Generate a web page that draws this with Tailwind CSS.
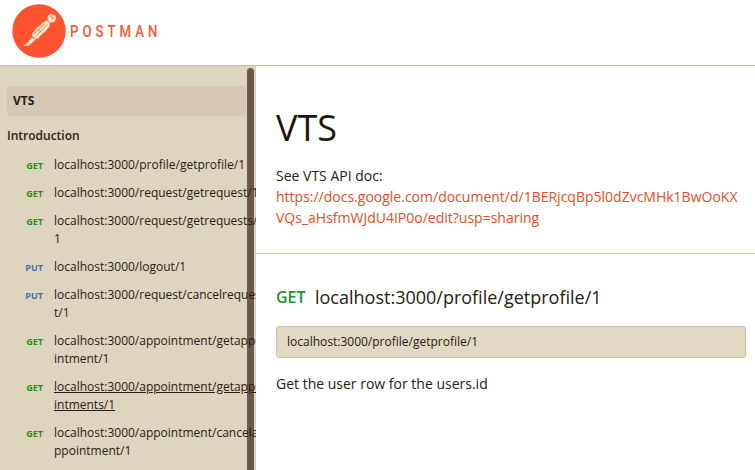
<!DOCTYPE html>
<html lang="en">
<head>
<meta charset="utf-8">
<title>VTS</title>
<script src="https://cdn.jsdelivr.net/npm/@tailwindcss/browser@4"></script>
</head>
<body class="flex h-[470px] w-[755px] flex-col overflow-hidden bg-white font-['Open_Sans',sans-serif] text-[#282010]">
<header class="flex h-[66px] shrink-0 border-b border-[#c8bda9] pl-3 pt-1">
  <svg class="h-[56px] w-[150px]" viewBox="0 0 150 56" role="img" aria-label="Postman">
    <circle cx="27" cy="27" r="26.7" fill="#ff5230"/>
    <g fill="#f9e6c4">
      <path d="M34.5 16.6L37.6 18.6L37.8 22L33.5 27.5L28.5 31.5L26.5 34.6L22.5 35L20 32.5L20.3 29.5L24.6 24.2L31.5 18.2Z"/>
      <path d="M19.6 33.5L24 35.6L16.5 41.8L12 42L12.3 40.8L15 39.6Z"/>
      <circle cx="39.7" cy="14.3" r="4.2"/>
    </g>
    <path d="M20 32.6L24.6 35.8M22.2 30L32.5 19.6M24.6 31.4L35.2 20.4M26 25L29.6 28.6M37.8 11.8Q40.5 11.6 40.2 14.8M40.2 14.8L42 13.3" fill="none" stroke="#f26040" stroke-width=".8"/>
    <text x="0" y="33" textLength="112" lengthAdjust="spacing" class="fill-[#ef5b38] font-['Roboto',sans-serif] text-[17px] font-medium" transform="translate(58 0) scale(.78 1)">POSTMAN</text>
  </svg>
</header>
<div class="flex min-h-0 flex-1">
  <nav class="relative w-64 shrink-0 overflow-hidden bg-[#ded5bf] pt-5">
    <div class="absolute left-[247px] top-[2px] h-[420px] w-[7px] rounded-full bg-[#6b5a4c]"></div>
    <div class="ml-[7px] flex h-[30px] w-[239px] items-center rounded-[3px] bg-[#d5c9b3] pl-[6px] text-xs font-bold">VTS</div>
    <div class="ml-[7px] mt-[11px] h-[18px] text-xs font-semibold leading-[18px]">Introduction</div>
    <ul class="relative mt-[11px] flex flex-col gap-[10px] whitespace-nowrap text-xs leading-[18px]">
      <li class="flex"><span class="h-[18px] w-[43px] shrink-0 pt-px text-right text-[9px] font-bold text-[#249024]">GET</span><a class="ml-[11px]">localhost:3000/profile/getprofile/1</a></li>
      <li class="flex"><span class="h-[18px] w-[43px] shrink-0 pt-px text-right text-[9px] font-bold text-[#249024]">GET</span><a class="ml-[11px]">localhost:3000/request/getrequest/1</a></li>
      <li class="flex"><span class="h-[18px] w-[43px] shrink-0 pt-px text-right text-[9px] font-bold text-[#249024]">GET</span><a class="ml-[11px]">localhost:3000/request/getrequests/<br>1</a></li>
      <li class="flex"><span class="h-[18px] w-[43px] shrink-0 pt-px text-right text-[9px] font-bold text-[#446fae]">PUT</span><a class="ml-[11px]">localhost:3000/logout/1</a></li>
      <li class="flex"><span class="h-[18px] w-[43px] shrink-0 pt-px text-right text-[9px] font-bold text-[#446fae]">PUT</span><a class="ml-[11px]">localhost:3000/request/cancelreques<br>t/1</a></li>
      <li class="flex"><span class="h-[18px] w-[43px] shrink-0 pt-px text-right text-[9px] font-bold text-[#249024]">GET</span><a class="ml-[11px]">localhost:3000/appointment/getappo<br>intment/1</a></li>
      <li class="flex"><span class="h-[18px] w-[43px] shrink-0 pt-px text-right text-[9px] font-bold text-[#249024]">GET</span><a class="ml-[11px] underline">localhost:3000/appointment/getappo<br>intments/1</a></li>
      <li class="flex"><span class="h-[18px] w-[43px] shrink-0 pt-px text-right text-[9px] font-bold text-[#249024]">GET</span><a class="ml-[11px]">localhost:3000/appointment/cancela<br>ppointment/1</a></li>
    </ul>
  </nav>
  <main class="min-w-0 flex-1">
    <section class="h-[188px] whitespace-nowrap border-b border-[#cfc7af] pl-5 pt-[38px]">
      <h1 class="h-12 text-[36px] leading-[48px] text-[#1c160c]">VTS</h1>
      <p class="mt-[13px] text-sm leading-[21px]">See VTS API doc:<br><a class="text-[#e14e26]">https://docs.google.com/document/d/1BERjcqBp5l0dZvcMHk1BwOoKX<br>VQs_aHsfmWJdU4IP0o/edit?usp=sharing</a></p>
    </section>
    <section class="pl-5 pr-[9px] pt-[29px]">
      <h2 class="flex h-7 items-center text-[18px]"><span class="w-[39px] text-base font-semibold text-[#249030]">GET</span>localhost:3000/profile/getprofile/1</h2>
      <div class="mt-[15px] flex h-8 items-center rounded-[3px] border border-[#c9bda4] bg-[#e1d9c4] pl-[10px] text-xs">localhost:3000/profile/getprofile/1</div>
      <p class="mt-[15px] text-sm leading-[21px]">Get the user row for the users.id</p>
    </section>
  </main>
</div>
</body>
</html>
